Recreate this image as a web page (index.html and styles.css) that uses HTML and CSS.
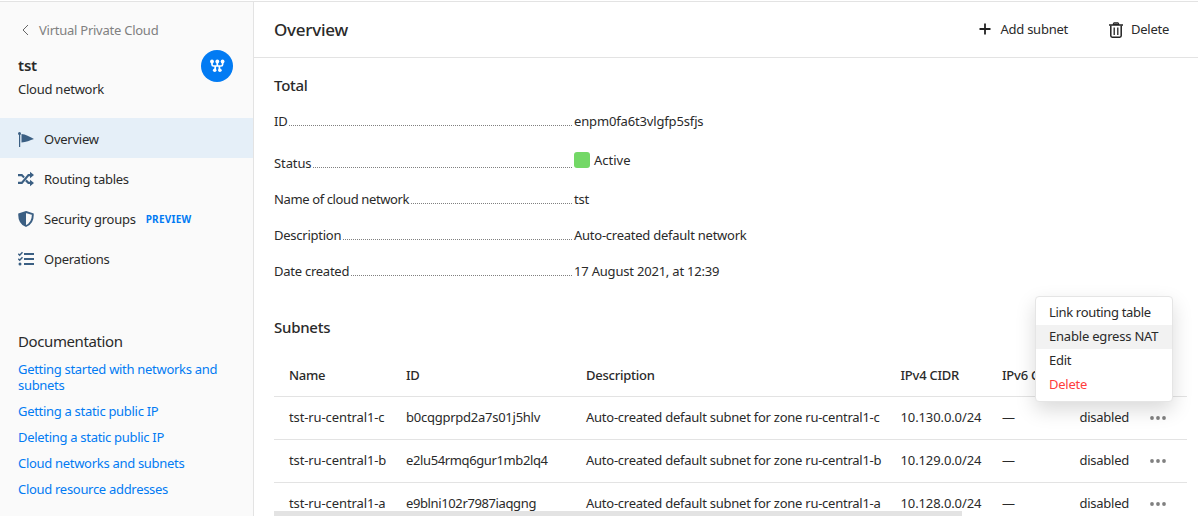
FILE: index.html
```
<!DOCTYPE html>
<html lang="en">
<head>
<meta charset="utf-8">
<title>Virtual Private Cloud</title>
<link rel="stylesheet" href="styles.css">
</head>
<body>
<div class="app">
  <aside class="sidebar">
    <div class="back"><svg class="back-icon" width="7" height="12" viewBox="0 0 7 12"><path d="M6 1 1 6l5 5" fill="none" stroke="#666" stroke-width="1"/></svg><span>Virtual Private Cloud</span></div>
    <div class="resource">
      <div class="resource-text">
        <div class="resource-name">tst</div>
        <div class="resource-type">Cloud network</div>
      </div>
      <svg class="resource-icon" width="32" height="32" viewBox="0 0 32 32"><circle cx="16" cy="16" r="16" fill="#027bf3"/><g fill="none" stroke="#fff" stroke-width="1.700"><path d="M11 11.500v3q0 1.500 1.500 1.500h7.600q1.500 0 1.500-1.500v-3M16.300 11v5M14.200 20v-4M18.400 20v-4"/></g><g fill="#fff"><circle cx="11" cy="11.500" r="1.900"/><circle cx="16.300" cy="11.500" r="1.900"/><circle cx="21.600" cy="11.500" r="1.900"/><circle cx="13.700" cy="20.300" r="1.800"/><circle cx="18.900" cy="20.300" r="1.800"/></g></svg>
    </div>
    <nav class="nav">
      <a class="nav-item active"><svg class="nav-icon" width="16" height="16" viewBox="0 0 16 16" fill="#3b5f83"><circle cx="1.500" cy="2.500" r="1.500"/><path d="M1 2h1.200v14H1zM3.500 3c4 .3 8 2.800 12.500 5C12 9.500 8 11 3.500 11.500z"/></svg><span>Overview</span></a>
      <a class="nav-item"><svg class="nav-icon" width="16" height="16" viewBox="0 0 16 16" fill="#3b5f83"><path d="M0 3h4.200L6.800 5.800 5.400 7.300 3.400 5.200H0zM0 10.800h3.400L10 3h2V.8L16 4l-4 3.200V5.200h-1.100L4.300 13H0zM7.200 10.200l1.400-1.600 2.300 2.200H12V8.800L16 12l-4 3.200V13h-2z"/></svg><span>Routing tables</span></a>
      <a class="nav-item"><svg class="nav-icon" width="16" height="16" viewBox="0 0 16 16"><path d="M8 1 14.800 3.200C15 8.800 12.600 13 8 15 3.400 13 1 8.800 1.200 3.200z" fill="none" stroke="#3b5f83" stroke-width="1.900"/><path d="M8 1v14C3.400 13 1 8.800 1.200 3.200z" fill="#3b5f83"/></svg><span>Security groups</span><span class="preview">PREVIEW</span></a>
      <a class="nav-item"><svg class="nav-icon" width="16" height="16" viewBox="0 0 16 16"><path d="M6 3h10M6 8h10M6 13h10" stroke="#3b5f83" stroke-width="2"/><path d="M.3 2.800 1.700 4.200 4.500 1.200M.3 7.800 1.700 9.200 4.500 6.200" fill="none" stroke="#3b5f83" stroke-width="1.500"/><circle cx="2" cy="13" r="1.500" fill="#3b5f83"/></svg><span>Operations</span></a>
    </nav>
    <section class="docs">
      <h2 class="docs-title">Documentation</h2>
      <a class="doc">Getting started with networks and<br>subnets</a>
      <a class="doc">Getting a static public IP</a>
      <a class="doc">Deleting a static public IP</a>
      <a class="doc">Cloud networks and subnets</a>
      <a class="doc">Cloud resource addresses</a>
    </section>
  </aside>
  <main class="main">
    <header class="header">
      <h1 class="title">Overview</h1>
      <div class="action"><svg width="12" height="12" viewBox="0 0 12 12"><path d="M6 .5v11M.5 6h11" stroke="#222" stroke-width="1.800"/></svg><span>Add subnet</span></div>
      <div class="action action-delete"><svg width="14" height="16" viewBox="0 0 14 16" fill="none" stroke="#222"><path d="M0 3h14" stroke-width="1.500"/><path d="M4 2.500 4.700.8h4.600L10 2.500z" fill="#777"/><path d="M1.800 3.500v10.300q0 1.400 1.400 1.400h7.600q1.400 0 1.400-1.400V3.500" stroke-width="1.500"/><path d="M5.200 5.500v7.500M8.800 5.500v7.500" stroke-width="1.300"/></svg><span>Delete</span></div>
    </header>
    <div class="content">
      <h2 class="section">Total</h2>
      <dl class="info">
        <div class="info-row"><dt>ID</dt><i class="dots"></i><dd class="network-id">enpm0fa6t3vlgfp5sfjs</dd></div>
        <div class="info-row status"><dt class="status-label">Status</dt><i class="dots"></i><dd class="status-value"><i class="badge"></i>Active</dd></div>
        <div class="info-row"><dt class="narrow">Name of cloud network</dt><i class="dots"></i><dd>tst</dd></div>
        <div class="info-row"><dt>Description</dt><i class="dots"></i><dd>Auto-created default network</dd></div>
        <div class="info-row"><dt>Date created</dt><i class="dots"></i><dd class="date">17 August 2021, at 12:39</dd></div>
      </dl>
      <h2 class="section subnets-title">Subnets</h2>
      <div class="table">
        <div class="row head"><span>Name</span><span>ID</span><span>Description</span><span>IPv4 CIDR</span><span>IPv6 CIDR</span><span></span><span></span></div>
        <div class="row"><span class="name">tst-ru-central1-c</span><span>b0cqgprpd2a7s01j5hlv</span><span>Auto-created default subnet for zone ru-central1-c</span><span class="cidr">10.130.0.0/24</span><span>—</span><span>disabled</span><svg class="more" width="16" height="4" viewBox="0 0 16 4"><circle cx="2" cy="2" r="1.900"/><circle cx="8" cy="2" r="1.900"/><circle cx="14" cy="2" r="1.900"/></svg></div>
        <div class="row"><span class="name">tst-ru-central1-b</span><span class="narrow">e2lu54rmq6gur1mb2lq4</span><span>Auto-created default subnet for zone ru-central1-b</span><span class="cidr">10.129.0.0/24</span><span>—</span><span>disabled</span><svg class="more" width="16" height="4" viewBox="0 0 16 4"><circle cx="2" cy="2" r="1.900"/><circle cx="8" cy="2" r="1.900"/><circle cx="14" cy="2" r="1.900"/></svg></div>
        <div class="row"><span class="name">tst-ru-central1-a</span><span class="narrow">e9blni102r7987iaqgng</span><span>Auto-created default subnet for zone ru-central1-a</span><span class="cidr">10.128.0.0/24</span><span>—</span><span>disabled</span><svg class="more" width="16" height="4" viewBox="0 0 16 4"><circle cx="2" cy="2" r="1.900"/><circle cx="8" cy="2" r="1.900"/><circle cx="14" cy="2" r="1.900"/></svg></div>
        <div class="scrollbar"></div>
        <div class="menu">
          <div class="menu-item link">Link routing table</div>
          <div class="menu-item hover">Enable egress NAT</div>
          <div class="menu-item">Edit</div>
          <div class="menu-item danger">Delete</div>
        </div>
      </div>
    </div>
  </main>
</div>
</body>
</html>
```
FILE: styles.css
```
* { box-sizing: border-box; }
body { margin: 0; background: #fff; color: #2a2a2a; font: 13px/16px "Noto Sans", sans-serif; letter-spacing: -.25px; }
h1, h2, dl, dd { margin: 0; font-weight: 500; }
dt, dd { font-weight: 400; }
.app { display: flex; width: 1198px; height: 516px; padding-top: 1px; overflow: hidden; }
.sidebar { width: 254px; border: solid #e3e3e3; border-width: 1px 1px 0 0; background: #fafafa; }
.back { display: flex; align-items: center; gap: 10px; height: 18px; margin: 19px 0 0 22px; color: #808080; }
.resource { display: flex; justify-content: space-between; height: 79px; padding: 11px 20px 0 18px; }
.resource-name { font-size: 15px; line-height: 20px; font-weight: 600; margin-top: 5px; letter-spacing: -.2px; }
.resource-type { margin-top: 6px; }
.nav-item { display: flex; align-items: center; height: 40px; padding: 2px 0 0 18px; }
.nav-icon { margin-right: 10px; }
.nav-item.active { background: #e5eff8; }
.preview { color: #027bf3; font-size: 10px; font-weight: 700; margin-left: 10px; letter-spacing: .25px; }
.docs { padding: 53px 0 0 18px; color: #027bf3; letter-spacing: -.3px; }
.docs-title { color: #2a2a2a; font-size: 15px; line-height: 20px; font-weight: 400; margin-bottom: 10px; letter-spacing: -.4px; }
.doc { display: block; margin-bottom: 10px; white-space: nowrap; }
.main { flex: 1; border-top: 1px solid #e3e3e3; }
.header { display: flex; align-items: center; height: 56px; padding: 0 29px 0 20px; border-bottom: 1px solid #e3e3e3; }
.title { flex: 1; font-size: 17px; line-height: 22px; }
.action { display: flex; align-items: center; gap: 9px; margin-top: -2px; }
.action svg { margin-top: 1px; }
.action-delete { margin-left: 41px; gap: 8px; }
.action-delete svg { margin-top: 2px; }
.content { padding: 16px 11px 0 20px; }
.section { font-size: 15px; line-height: 22px; }
.info { padding-top: 17px; width: 700px; }
.info-row { display: flex; height: 36px; }
.info-row.status { padding-top: 6px; height: 42px; }
.dots { flex: 1; height: 13px; margin: 0 2px; border-bottom: 1px dotted #808080; }
.info-row dd { flex: 0 0 400px; }
.network-id { letter-spacing: -.15px; }
.status-label { letter-spacing: -.1px; }
.date { letter-spacing: -.2px; }
.status-value { display: flex; gap: 4px; margin-top: -3px; letter-spacing: 0; }
.badge { width: 16px; height: 16px; border-radius: 3px; background: #73d866; }
.subnets-title { margin-top: 17px; }
.table { position: relative; padding-top: 17px; }
.row { display: grid; grid-template-columns: 117px 180px 314.5px 101.5px 77.5px 70.5px 37px; align-items: center; height: 43px; padding: 0 0 2px 15px; border-bottom: 1px solid #e3e3e3; white-space: nowrap; }
.head { height: 42px; font-weight: 500; }
.name { letter-spacing: -.11px; }
.narrow { letter-spacing: -.38px; }
.cidr { letter-spacing: -.11px; }
.more { fill: #808080; margin-top: 2px; }
.scrollbar { position: absolute; left: 0; top: 173px; width: 688px; height: 5px; background: #e3e3e3; }
.menu { position: absolute; left: 761px; top: -42px; width: 138px; height: 106px; padding: 4px 0; border: 1px solid #e5e5e5; border-radius: 4px; background: #fff; box-shadow: 0 8px 20px rgba(0, 0, 0, .15); }
.menu-item { height: 24px; padding: 3px 13px 5px; white-space: nowrap; }
.menu-item.hover { background: #f2f2f2; letter-spacing: -.2px; }
.link { letter-spacing: -.33px; }
.danger { color: #ff3d3d; }
```
